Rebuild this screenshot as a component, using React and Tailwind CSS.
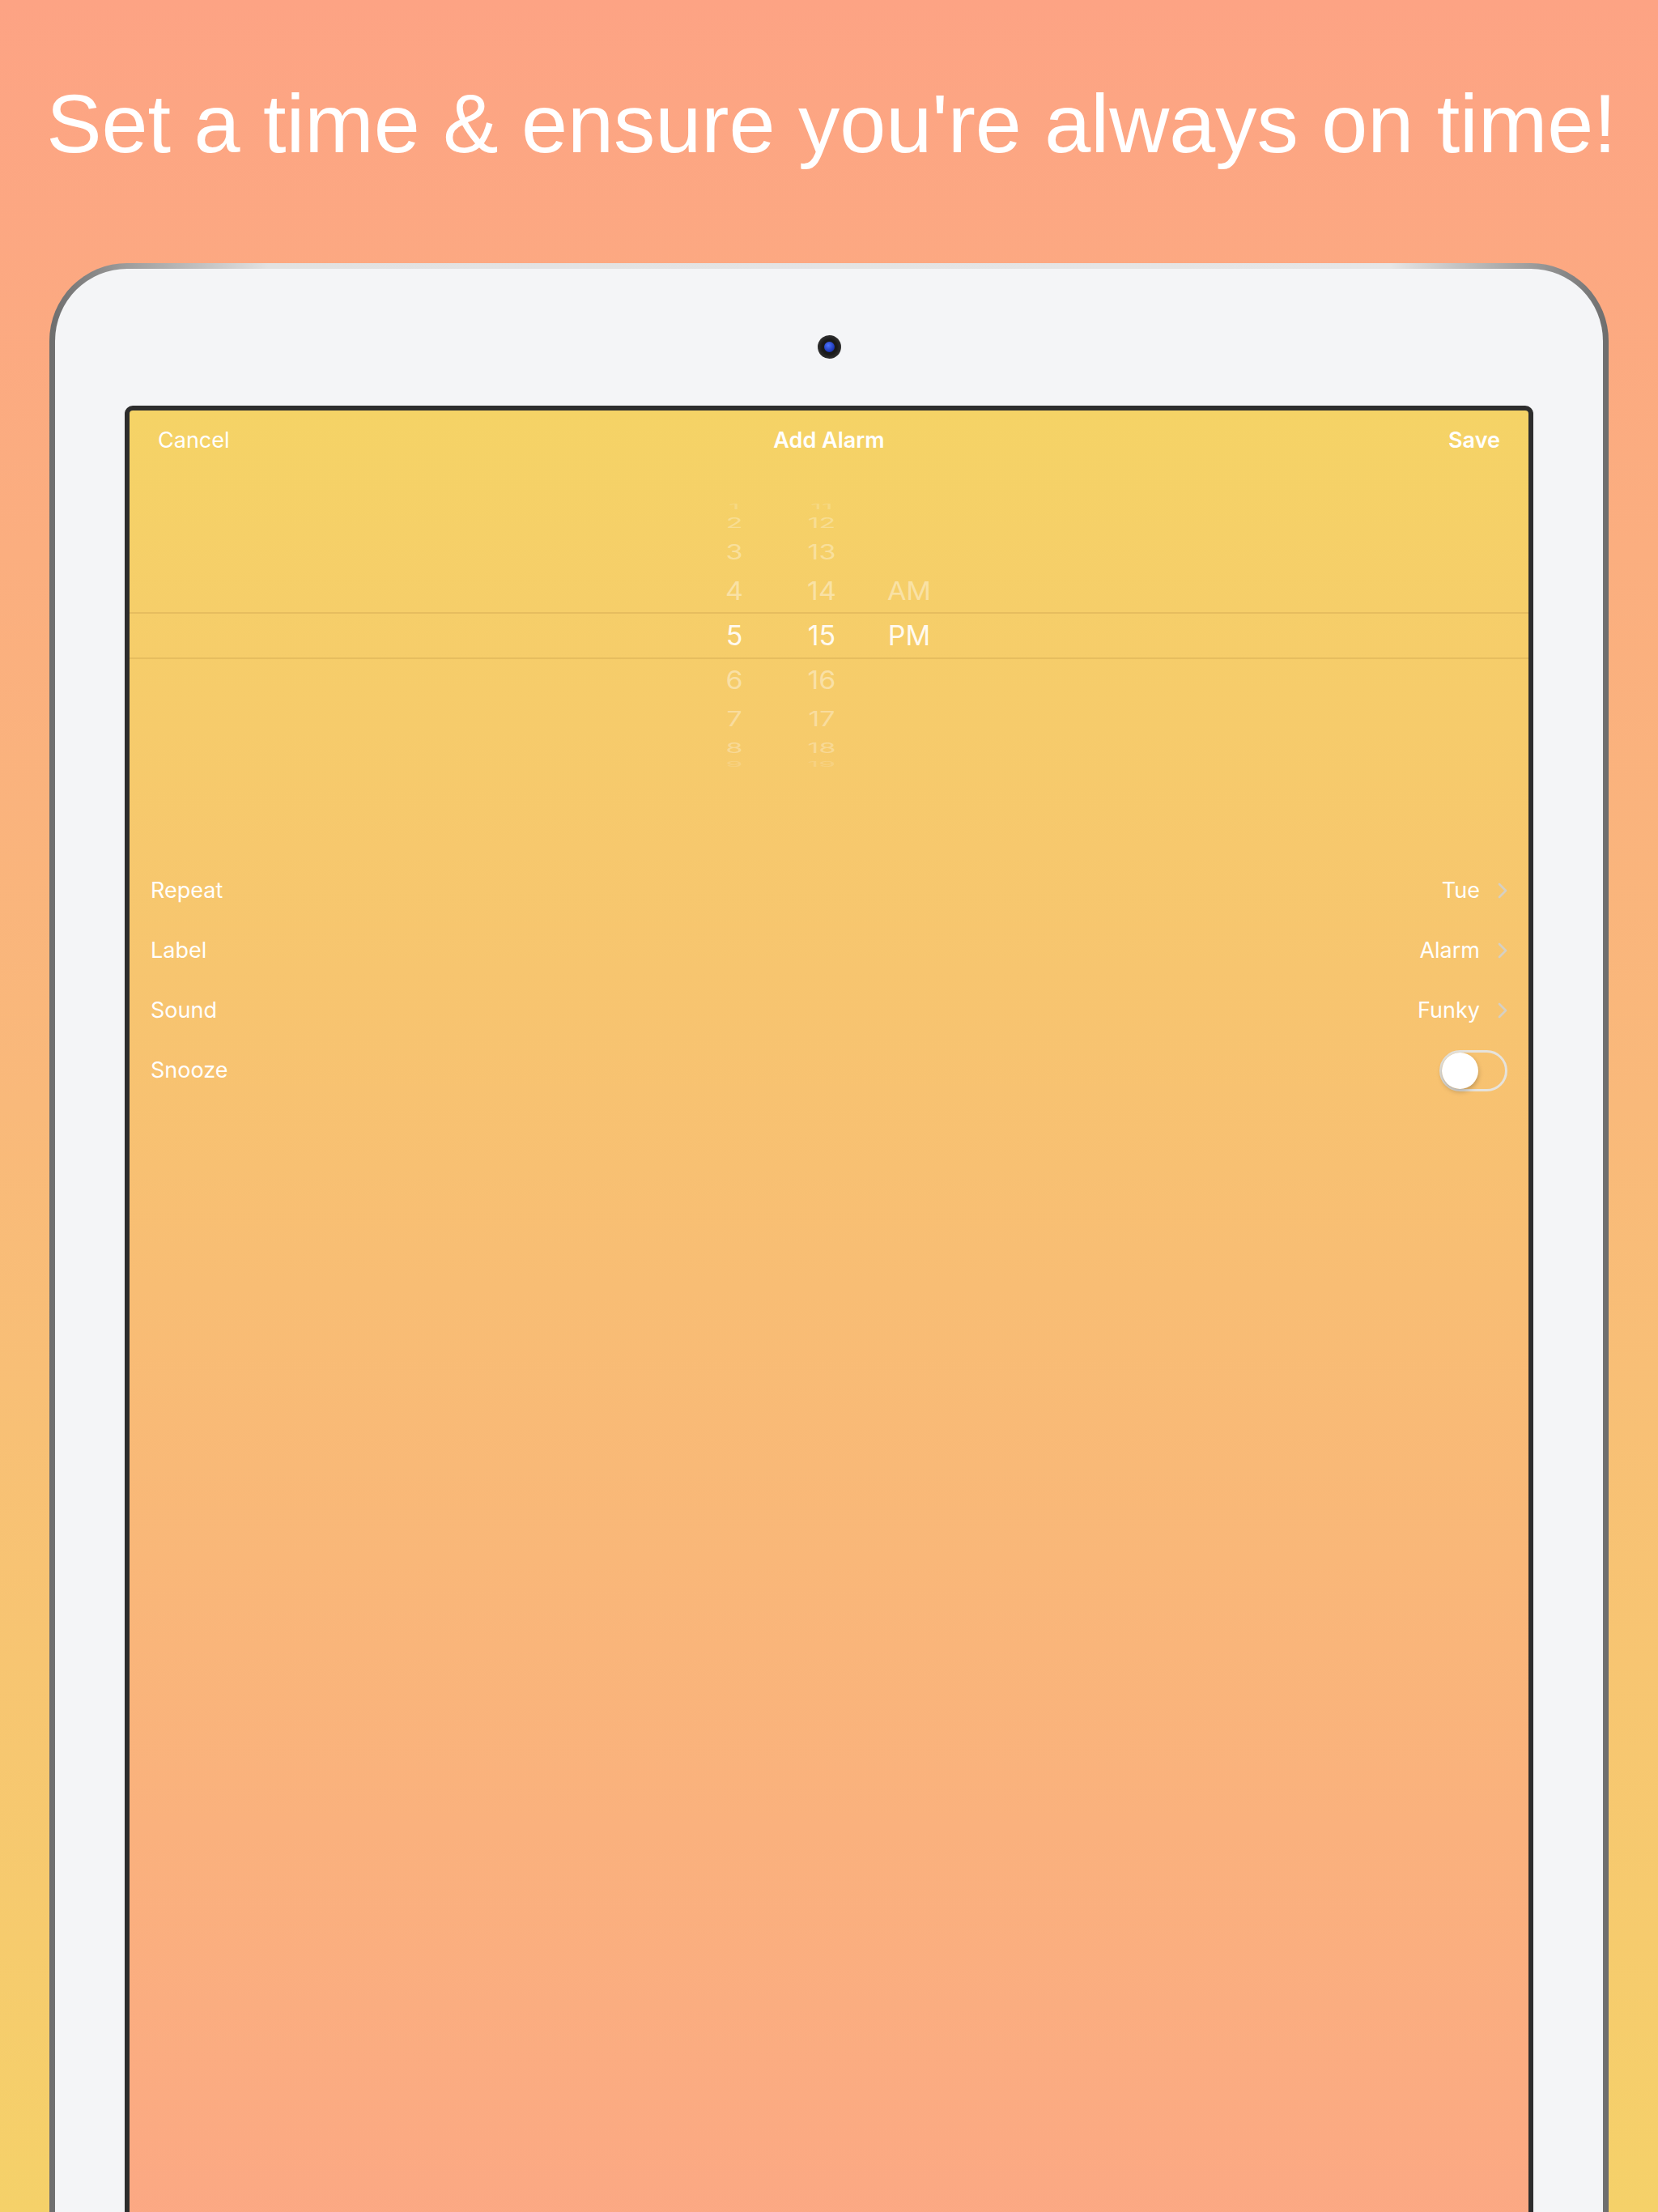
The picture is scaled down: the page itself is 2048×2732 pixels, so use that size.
const above = [
  { h: "h-[12px]", s: "scale-y-[0.25]", o: "opacity-[0.18]", hr: "1", mn: "11", ap: "" },
  { h: "h-[28px]", s: "scale-y-[0.5]", o: "opacity-[0.28]", hr: "2", mn: "12", ap: "" },
  { h: "h-[44px]", s: "scale-y-[0.74]", o: "opacity-[0.34]", hr: "3", mn: "13", ap: "" },
  { h: "h-[52px]", s: "scale-y-[0.9]", o: "opacity-[0.4]", hr: "4", mn: "14", ap: "AM" },
];

const below = [
  { h: "h-[52px]", s: "scale-y-[0.9]", o: "opacity-[0.4]", hr: "6", mn: "16", ap: "" },
  { h: "h-[44px]", s: "scale-y-[0.74]", o: "opacity-[0.34]", hr: "7", mn: "17", ap: "" },
  { h: "h-[28px]", s: "scale-y-[0.5]", o: "opacity-[0.28]", hr: "8", mn: "18", ap: "" },
  { h: "h-[12px]", s: "scale-y-[0.25]", o: "opacity-[0.14]", hr: "9", mn: "19", ap: "" },
];

const settings = [
  { label: "Repeat", value: "Tue" },
  { label: "Label", value: "Alarm" },
  { label: "Sound", value: "Funky" },
];

function WheelRow({ row }) {
  return (
    <div className={`flex justify-center pr-[18px] ${row.h}`}>
      {[row.hr, row.mn, row.ap].map((v, i) => (
        <div key={i} className={`w-[108px] flex items-center justify-center text-white ${row.o}`}>
          <span className={`block text-[34px] leading-none ${row.s}`}>{v}</span>
        </div>
      ))}
    </div>
  );
}

function Chevron() {
  return (
    <svg width="12" height="20" viewBox="0 0 12 20" fill="none">
      <path d="M2 2 L10 10 L2 18" stroke="#d6d0c4" strokeWidth="2.6" strokeLinecap="round" strokeLinejoin="round" />
    </svg>
  );
}

export default function App() {
  return (
    <div className="w-[2048px] h-[2732px] overflow-hidden bg-[linear-gradient(to_bottom,#fda384,#f9b97a_50%,#f5d169)]">
      <div className="h-[325px] pt-[102px] pl-[6px] text-center">
        <h1 className="font-['Liberation_Sans',sans-serif] text-[102.5px] leading-[102px] text-white whitespace-nowrap">
          Set a time &amp; ensure you're always on time!
        </h1>
      </div>

      <div className="ml-[61px] w-[1926px] h-[2600px] rounded-[96px] p-[7px] bg-[linear-gradient(to_right,#6d6d6d,#9d9d9d_5%,#e2e2e2_14%,#e6e6e6_86%,#9d9d9d_95%,#6d6d6d)]">
        <div className="h-full rounded-[89px] bg-[#f4f5f7] flex flex-col items-center pt-[82px]">
          <div className="w-[29px] h-[29px] rounded-full bg-[radial-gradient(circle,#1a1a1a_45%,#4a4a4a)] flex items-center justify-center">
            <div className="w-[13px] h-[13px] rounded-full bg-[radial-gradient(circle_at_40%_35%,#4d74ff,#1b34b0_70%)]" />
          </div>

          <div className="mt-[58px] w-[1740px] flex-1 border-[6px] border-b-0 border-[#2d2d2d] rounded-t-[10px] bg-[linear-gradient(to_bottom,#f5d366,#f8bd74_45%,#fca586)] font-['Inter',sans-serif] text-white">
            <div className="h-[74px] grid grid-cols-3 items-center px-[35px] text-[27px]">
              <span>Cancel</span>
              <span className="text-center font-semibold">Add Alarm</span>
              <span className="text-right font-semibold">Save</span>
            </div>

            <div className="mt-[23px] h-[364px] flex flex-col">
              <div className="h-[152px] flex flex-col justify-end">
                {above.map((r) => (
                  <WheelRow key={r.hr} row={r} />
                ))}
              </div>
              <div className="h-[58px] border-y-2 border-[#e2b95c]/80 flex items-center justify-center pr-[18px]">
                {["5", "15", "PM"].map((v) => (
                  <div key={v} className="w-[108px] text-center text-[34px] leading-none text-[#fffaf0]">
                    {v}
                  </div>
                ))}
              </div>
              <div className="h-[154px] flex flex-col">
                {below.map((r) => (
                  <WheelRow key={r.hr} row={r} />
                ))}
              </div>
            </div>

            <div className="mt-[95px] flex flex-col text-[27px]">
              {settings.map((s) => (
                <div key={s.label} className="h-[74px] flex items-center justify-between pl-[26px] pr-[26px]">
                  <span>{s.label}</span>
                  <div className="flex items-center gap-[22px]">
                    <span>{s.value}</span>
                    <Chevron />
                  </div>
                </div>
              ))}
              <div className="h-[74px] flex items-center justify-between pl-[26px] pr-[26px]">
                <span>Snooze</span>
                <div className="w-[84px] h-[51px] rounded-full border-[3px] border-[#e6e3dc] flex items-center">
                  <div className="w-[45px] h-[45px] rounded-full bg-white shadow-[0_3px_6px_rgba(0,0,0,0.25)]" />
                </div>
              </div>
            </div>
          </div>
        </div>
      </div>
    </div>
  );
}
